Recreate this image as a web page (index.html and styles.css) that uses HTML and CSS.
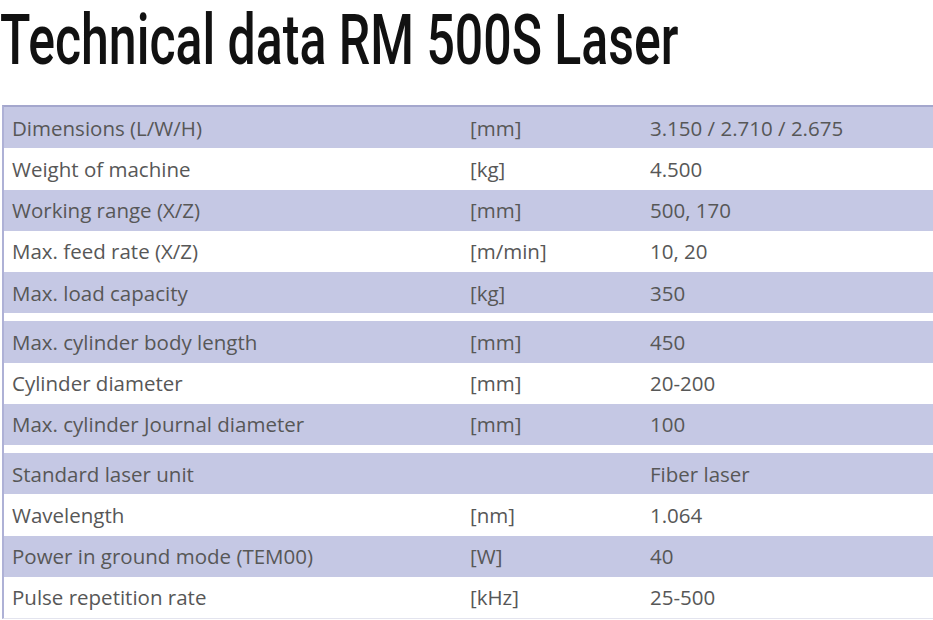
FILE: index.html
```html
<!DOCTYPE html>
<html lang="en">
<head>
<meta charset="utf-8">
<title>Technical data RM 500S Laser</title>
<link rel="stylesheet" href="styles.css">
</head>
<body>
<div class="page">
  <h1 class="title"><span class="title-text">Technical data RM 500S Laser</span></h1>
  <table class="specs">
    <colgroup>
      <col class="c-name">
      <col class="c-unit">
      <col class="c-value">
    </colgroup>
    <tbody>
      <tr class="shade"><td>Dimensions (L/W/H)</td><td>[mm]</td><td>3.150 / 2.710 / 2.675</td></tr>
      <tr><td>Weight of machine</td><td>[kg]</td><td>4.500</td></tr>
      <tr class="shade"><td>Working range (X/Z)</td><td>[mm]</td><td>500, 170</td></tr>
      <tr><td>Max. feed rate (X/Z)</td><td>[m/min]</td><td>10, 20</td></tr>
      <tr class="shade"><td>Max. load capacity</td><td>[kg]</td><td>350</td></tr>
    </tbody>
    <tbody>
      <tr class="shade"><td>Max. cylinder body length</td><td>[mm]</td><td>450</td></tr>
      <tr><td>Cylinder diameter</td><td>[mm]</td><td>20-200</td></tr>
      <tr class="shade"><td>Max. cylinder Journal diameter</td><td>[mm]</td><td>100</td></tr>
    </tbody>
    <tbody>
      <tr class="shade"><td>Standard laser unit</td><td></td><td>Fiber laser</td></tr>
      <tr><td>Wavelength</td><td>[nm]</td><td>1.064</td></tr>
      <tr class="shade"><td>Power in ground mode (TEM00)</td><td>[W]</td><td>40</td></tr>
      <tr><td>Pulse repetition rate</td><td>[kHz]</td><td>25-500</td></tr>
    </tbody>
  </table>
</div>
</body>
</html>
```

FILE: styles.css
```css
html, body {
  margin: 0;
  padding: 0;
  background: #ffffff;
  overflow: hidden;
}

.page {
  width: 1000px;
}

.title {
  margin: 0 0 47px 0;
  height: 58px;
  font-family: Roboto, "Liberation Sans", sans-serif;
  font-weight: 500;
  font-size: 50px;
  line-height: 58px;
  color: #111111;
  white-space: nowrap;
}

.title-text {
  display: inline-block;
  transform: scaleY(1.4);
  transform-origin: 0 0;
}

.specs {
  width: 1000px;
  margin-left: 2px;
  border-collapse: separate;
  border-spacing: 0;
  border-top: 2px solid #a4a7cd;
  border-left: 2px solid #aeb1d6;
  border-bottom: 1px solid #e3e4ee;
  font-family: "Open Sans", "Noto Sans", sans-serif;
  font-size: 20.5px;
  color: #575757;
}

.c-name { width: 458px; }
.c-unit { width: 180px; }

.specs td {
  height: 41.25px;
  padding: 0 0 0 8px;
  box-sizing: border-box;
  vertical-align: middle;
  white-space: nowrap;
}

.specs tr.shade td {
  background: #c5c8e4;
}

.specs tbody + tbody tr:first-child td {
  border-top: 8px solid #ffffff;
  height: 49.25px;
}
```
